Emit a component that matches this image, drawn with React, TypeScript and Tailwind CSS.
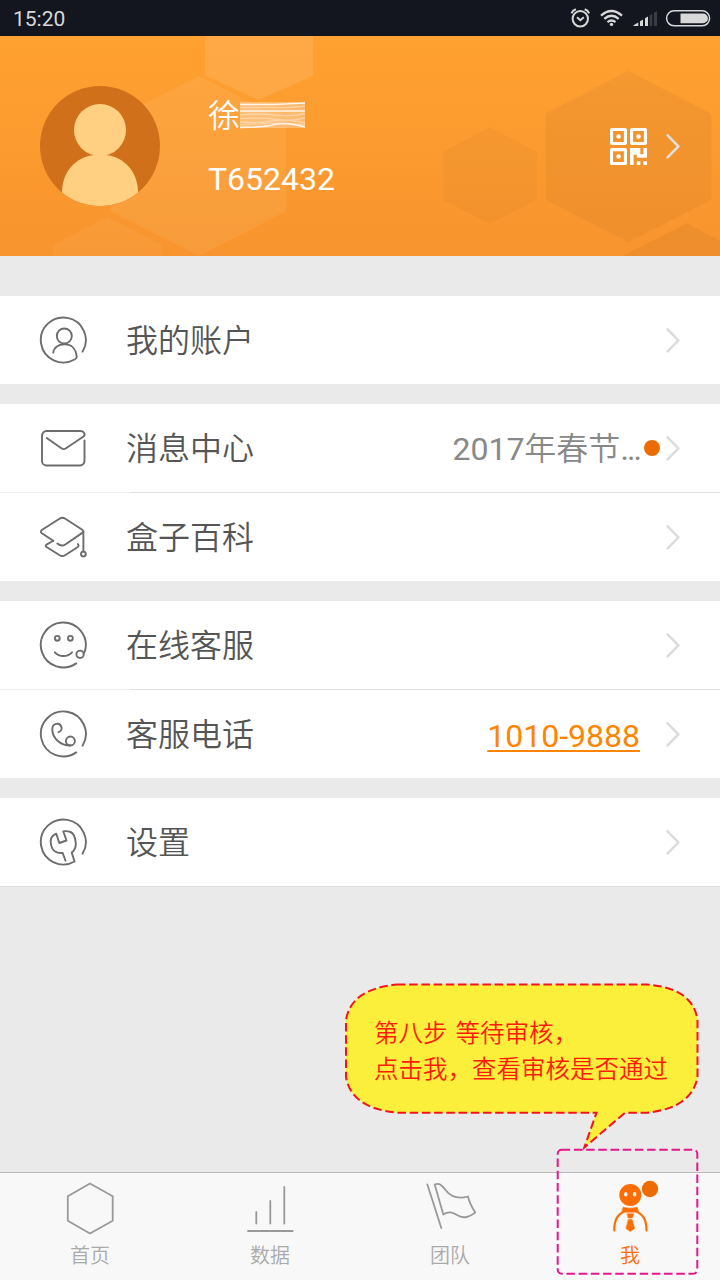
import type { ReactNode } from "react";

const sans = "font-[Roboto,'Noto_Sans_CJK_SC',sans-serif]";

function Chevron({ className = "text-[#dcdcdc]" }: { className?: string }) {
    return <svg className={`w-4 h-7 shrink-0 ${className}`} viewBox="0 0 16 28" fill="none" stroke="currentColor" strokeWidth="2.6" strokeLinecap="round" strokeLinejoin="round">
        <path d="M2.600 3.300 13.400 14.300 2.600 25.300" />
    </svg>
}

function RowIcon({ children }: { children: ReactNode }) {
    return <svg className="w-12 h-12 shrink-0 text-[#6c6c6c]" viewBox="0 0 48 48" fill="none" stroke="currentColor" strokeWidth="1.9" strokeLinecap="round" strokeLinejoin="round">
        {children}
    </svg>
}

const icons = {
    account: <>
        <path d="M43.600 35.600A22.500 22.500 0 1 0 35.550 43.500Q38 42.300 37.600 40.500C37 33 32.500 28.300 25.700 28.300 19.500 28.300 15 31.500 14.300 36.700" />
        <circle cx="25.300" cy="20" r="7.500" />
    </>,
    message: <path d="M45.500 16.500V37a4.500 4.500 0 0 1-4.500 4.500H7.500A4.500 4.500 0 0 1 3 37V11.500A4.500 4.500 0 0 1 7.500 7H41c4 0 6 3.200 3.500 5.500L27 24.300q-2.300 1.600-4.600 0L7.700 14" />,
    wiki: <>
        <path d="M14.300 27.700 2.800 20.200q-2-1.600 0-3.200L20.500 5.700q2.900-1.800 5.800 0l17 11q2 1.600 0 3.200L26.300 31.500q-3.800 2.500-8-1" />
        <path d="M14.300 27.700 7.500 31.600q-1.600 1.200 0 2.400L20.700 42.200q2.700 1.700 5.400 0L38.800 34q1.600-1.200 0-2.900" />
        <path d="M44.400 18.700V38.500" />
        <circle cx="44.400" cy="41" r="2.400" />
    </>,
    service: <>
        <path d="M37.200 42.400A22.500 22.500 0 1 1 46.300 28.700Q45.800 31 44.500 32.500" />
        <circle cx="41.100" cy="33.300" r="3.700" />
        <circle cx="18.300" cy="17.300" r="2.400" />
        <circle cx="31.400" cy="17.300" r="2.400" />
        <path d="M15.800 31.300c4.500 5 12.700 5 17.200 0" />
    </>,
    phone: <>
        <path d="M37.200 42.400A22.500 22.500 0 1 1 43.600 35.600" />
        <path d="M19.500 22.200c3-1 3.600-3.700 2.700-5.700-1.700-4-8.900-4-8.900 2.800 0 8.800 8 16.200 18 16.200" />
        <circle cx="31.400" cy="31" r="4.500" />
    </>,
    settings: <path d="M43.600 35.600A22.500 22.500 0 1 0 35.550 43.500L32.700 34.500C35 33 37 29.500 36.800 25c-.5-6-2.400-9.800-5.300-11-2.500-.8-5.500-1-7.200-.5l3.200 9-7.200 2.500-3-9.300C14 17 11.500 20 11.700 24c.3 4.800 1.600 7.500 4 9.300 2.300 1.600 5 1.900 8 1.700l2.800 7.700" />,
};

function Row({ icon, label, children }: { icon: ReactNode; label: string; children?: ReactNode }) {
    return <div className="flex items-center h-[88px] pl-[39px] pr-[39px] bg-white">
        <RowIcon>{icon}</RowIcon>
        <span className="ml-[39px] pt-[2px] text-[32px] leading-[44px] text-[#555]">{label}</span>
        <div className="ml-auto flex items-center">
            {children}
            <Chevron />
        </div>
    </div>
}

function Divider() {
    return <div className="flex h-px">
        <div className="w-[130px] bg-[#f0f0f0]"></div>
        <div className="flex-1 bg-[#e0e0e0]"></div>
    </div>
}

function StatusBar() {
    return <div className="flex items-center justify-between h-9 pl-[13px] pr-[9px] bg-[#13161f] text-[#d8d8d8]">
        <span className="text-[21px] leading-none pt-0.5 font-normal">15:20</span>
        <svg className="w-[142px] h-9" viewBox="569 0 142 36" fill="none" stroke="currentColor">
            {/* Alarm */}
            <circle cx="580.300" cy="18.800" r="7.700" strokeWidth="2" />
            <path d="m577 17.300 3.300 2.900 3.500-3" strokeWidth="1.900" />
            <path d="M571.500 13.300q1-2.800 4.400-4M589.100 13.300q-1-2.800-4.400-4" strokeWidth="2" />
            {/* Wifi */}
            <path d="M601 15.600q10.500-9.300 21 0M604.300 18.900q7.200-6.200 14.400 0M607.500 22.100q4-3.300 8 0" strokeWidth="2.300" />
            <circle cx="611.500" cy="24.400" r="1.700" fill="currentColor" stroke="none" />
            {/* Signal */}
            <g fill="currentColor" stroke="none">
                <path d="M633.500 26v-.8l4.800-2.700V26zM640 26v-4.800l3-1.800V26zM645 26v-7.700l3-1.800V26z" />
                <path d="M649.500 26V15.500l2.800-1.700V26zM654 26V12.800l3-1.800V26z" opacity=".2" />
            </g>
            {/* Battery */}
            <rect x="666.600" y="10.800" width="43" height="15" rx="7.500" strokeWidth="1.500" />
            <path d="M680.500 13.500H703a4.800 4.800 0 0 1 0 9.800h-22.500z" fill="currentColor" stroke="none" />
        </svg>
    </div>
}

function QrIcon() {
    return <svg className="w-[37px] h-[37px]" viewBox="0 0 36 36" fill="none" stroke="white" strokeWidth="3">
        <rect x="1.500" y="1.500" width="13.500" height="13.500" rx=".3" />
        <rect x="21" y="1.500" width="13.500" height="13.500" rx=".3" />
        <rect x="1.500" y="21" width="13.500" height="13.500" rx=".3" />
        <g fill="white" stroke="none">
            <circle cx="8.300" cy="8.300" r="2.200" />
            <circle cx="27.700" cy="8.300" r="2.200" />
            <circle cx="8.300" cy="27.700" r="2.200" />
            <path d="M19.500 19.500h10v6h3v-6H36V29H26v-3h-3v10h-3.500zM26 32.300h3.500V36H26zM32.500 32.300H36V36h-3.500z" />
        </g>
    </svg>
}

function Header() {
    return <div className="relative flex items-center h-[220px] pl-10 pr-[39px] bg-linear-to-b from-[#ffa131] to-[#f8942d] text-white">
        {/* Honeycomb backdrop */}
        <svg className="absolute inset-0 w-full h-full" viewBox="0 36 720 220">
            <g fill="white" fillOpacity=".1">
                <path d="M205 36h108v39.500l-54 24.500-54-24.500z" />
                <path d="m199 76 87.300 45v90.300L199 256l-88.700-44.700V121z" fillOpacity=".07" />
                <path d="m107 216.500 54.700 28.500v11h-109v-11z" fillOpacity=".05" />
            </g>
            <g fill="#c87828" fillOpacity=".15">
                <path d="m490 127.300 47 24.400V200l-47 23.700-46.700-23.700v-48.300z" fillOpacity=".12" />
                <path d="m628.300 71 83 42.700V200l-83 42-82.600-42v-86.300z" fillOpacity=".19" />
                <path d="m686.700 223.300 33.300 17.400V256h-97z" fillOpacity=".22" />
            </g>
        </svg>
        <svg className="relative w-[120px] h-[120px]" viewBox="0 0 120 120">
            <circle cx="60" cy="60" r="60" fill="#d0701a" />
            <circle cx="60" cy="44" r="26" fill="#ffd082" />
            <path d="M22 106.500C22 84 38 68.500 60 68.500s38 15.500 38 38A60 60 0 0 1 22 106.500" fill="#ffd082" />
        </svg>
        <div className="relative ml-12 pt-[3px] flex flex-col gap-[19px] text-[32px] leading-[44px]">
            <div className="flex items-center">
                <span>徐</span>
                {/* Smudged given name */}
                <svg className="w-[66px] h-7 -mt-0.5" viewBox="0 0 66 28" fill="none" stroke="white">
                    <path d="M0 1h65v26H0z" fill="white" fillOpacity=".3" stroke="none" />
                    <path d="M0 3.500h34L65 2M0 10h65M0 26.500q22 0 34-3t31 2.500" strokeWidth="1.600" strokeOpacity=".85" />
                    <path d="M0 6.500h40q15 0 25-1.500M0 14q20-2 35 0t30-1.500M0 17.500q25-1 36 1t29-1.500M0 21q20 1 32-1t33 1.500M0 24q25-3 65-.5" strokeWidth="1.300" strokeOpacity=".35" />
                </svg>
            </div>
            <span className="font-normal">T652432</span>
        </div>
        <div className="relative ml-auto flex items-center gap-[18px]">
            <QrIcon />
            <Chevron className="text-[#e2dfdc]" />
        </div>
    </div>
}

function Tab({ label, active, children }: { label: string; active?: boolean; children: ReactNode }) {
    return <div className={`flex-1 flex flex-col items-center pt-[5px] ${active ? "text-[#ff6c00]" : "text-[#999]"}`}>
        <svg className="w-[60px] h-[60px]" viewBox="0 0 60 60" fill="none" stroke="currentColor" strokeWidth="1.800" strokeLinecap="round" strokeLinejoin="round">
            {children}
        </svg>
        <span className={`mt-[3px] text-xl leading-[30px] ${active ? "" : "text-[#aaa]"}`}>{label}</span>
    </div>
}

function TabBar() {
    return <div className="flex h-[108px] border-t border-[#b9b9b9] bg-[#f8f8f8]">
        <Tab label="首页">
            <path d="m30 5.500 22.700 12.700v24.600L30 55.500 7.800 42.800V18.200z" />
        </Tab>
        <Tab label="数据">
            <path d="M8 53h44.700M16.300 34v11.500M30.300 23v22.500M44.300 9v36.500" />
        </Tab>
        <Tab label="团队">
            <path d="M7.300 6.300 21.300 50M14.700 6.500C20 4.500 22.500 8 25.500 12c5 6.500 12 9.500 22.500 6.500 1.500 6.500 4 11 7.300 16-6.300 4.500-11 6.500-17.300 3-5.500-3.300-9.500-4.500-14.700-1z" />
        </Tab>
        <Tab label="我" active>
            <circle cx="30.300" cy="17" r="11" fill="currentColor" stroke="none" />
            <g fill="#f8f8f8" stroke="none">
                <ellipse cx="25.700" cy="16.200" rx="1.700" ry="2.300" />
                <ellipse cx="34.600" cy="16.200" rx="1.700" ry="2.300" />
            </g>
            <path d="M14.300 52.500c0-10 2.500-15.500 10-19h12c7.500 3.500 10.200 9 10.200 19" strokeWidth="2.200" />
            <path d="M23.300 29.300q7 1.800 14 0l1.200 4.200H22zM27.300 35.700h6.200l-1.200 4.300h-4zM28.500 41.500h3.600l2.500 9-4.300 3-4.300-3z" fill="currentColor" strokeWidth=".5" />
            <circle cx="50" cy="11" r="8.200" fill="#ec6c00" stroke="none" />
        </Tab>
    </div>
}

function Callout() {
    return <div className="absolute left-[344px] top-[982px] w-[357px] h-[295px]">
        <svg className="absolute inset-0 w-full h-full" viewBox="344 982 357 295" strokeWidth="2" strokeDasharray="8.500 3.700">
            <path d="M397 984.500H647Q693 988 697.500 1020V1077Q692 1108 647 1112.700H625L584.300 1147.500 596.500 1112.700H397Q351 1108 346 1077V1020Q351 989 397 984.500z" fill="#fbef3c" stroke="#f5141c" />
            <rect x="557.700" y="1149.700" width="139.600" height="124" rx="4" fill="none" stroke="#e5178b" />
        </svg>
        <p className="relative pl-[30px] pt-[34px] text-[24.500px] leading-9 text-[#ff1a0a] whitespace-nowrap [word-spacing:2px]">
            第八步 等待审核，<br />
            点击我，查看审核是否通过
        </p>
    </div>
}

export default function App() {
    return <div className={`relative flex flex-col w-[720px] h-[1280px] overflow-hidden bg-[#eaeaea] font-[350] ${sans}`}>
        <StatusBar />
        <Header />
        <div className="flex flex-col pt-10 gap-5">
            <Row icon={icons.account} label="我的账户" />
            <div>
                <Row icon={icons.message} label="消息中心">
                    <span className="pt-[2px] text-[32px] leading-[44px] text-[#888]">
                        <span className="font-normal">2017</span>年春节<span className="font-normal tracking-[-1.900px]">...</span>
                    </span>
                    <span className="ml-1 mr-[5px] w-4 h-4 rounded-full bg-[#ec6c00]"></span>
                </Row>
                <Divider />
                <Row icon={icons.wiki} label="盒子百科" />
            </div>
            <div>
                <Row icon={icons.service} label="在线客服" />
                <Divider />
                <Row icon={icons.phone} label="客服电话">
                    <span className="mr-[25px] pt-[3px] font-normal text-[32px] leading-[44px] text-[#ff8500] underline decoration-2 underline-offset-3">1010-9888</span>
                </Row>
            </div>
            <div className="border-b border-[#dfdfdf]">
                <Row icon={icons.settings} label="设置" />
            </div>
        </div>
        <div className="mt-auto">
            <TabBar />
        </div>
        <Callout />
    </div>
}
